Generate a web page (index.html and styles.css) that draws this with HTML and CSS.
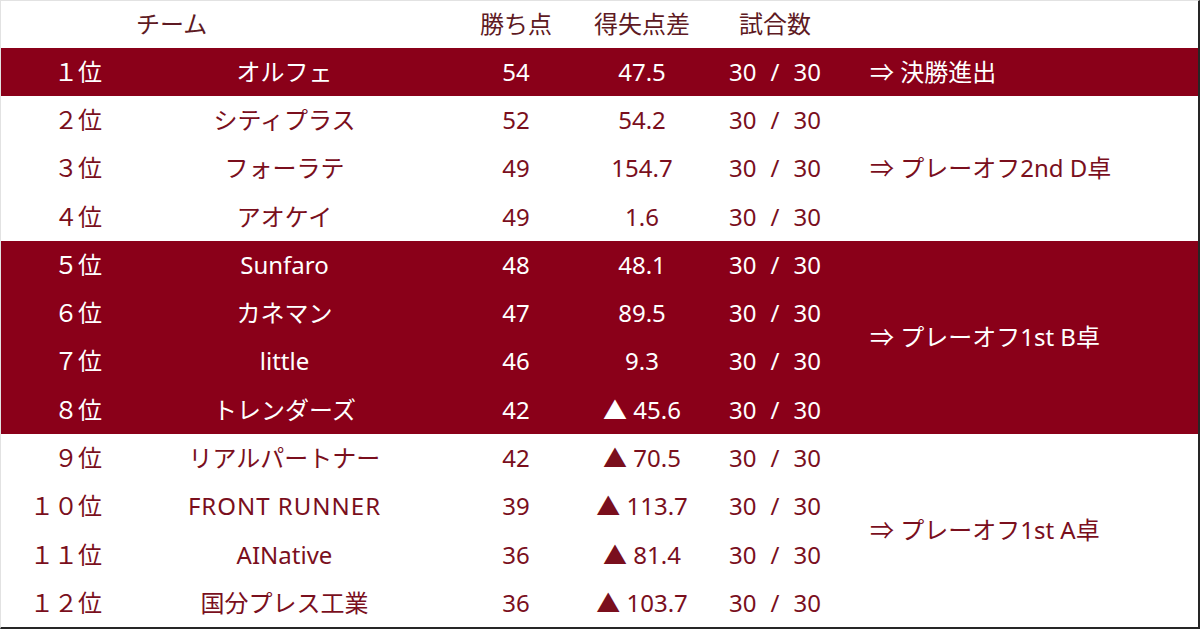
FILE: index.html
```html
<!DOCTYPE html>
<html lang="ja">
<head>
<meta charset="utf-8">
<link rel="stylesheet" href="styles.css">
</head>
<body>
<div class="frame">
<table class="standings">
  <colgroup>
    <col class="c-rank"><col class="c-team"><col class="c-pts"><col class="c-diff"><col class="c-games"><col class="c-note">
  </colgroup>
  <thead>
    <tr class="head">
      <th></th><th class="team-head">チーム</th><th>勝ち点</th><th>得失点差</th><th>試合数</th><th></th>
    </tr>
  </thead>
  <tbody>
    <tr class="hl">
      <td class="rank">１位</td><td>オルフェ</td><td>54</td><td>47.5</td><td class="games">30<span class="sl">/</span>30</td><td class="note">⇒ 決勝進出</td>
    </tr>
    <tr>
      <td class="rank">２位</td><td>シティプラス</td><td>52</td><td>54.2</td><td class="games">30<span class="sl">/</span>30</td><td class="note" rowspan="3">⇒ プレーオフ2nd D卓</td>
    </tr>
    <tr>
      <td class="rank">３位</td><td>フォーラテ</td><td>49</td><td>154.7</td><td class="games">30<span class="sl">/</span>30</td>
    </tr>
    <tr>
      <td class="rank">４位</td><td>アオケイ</td><td>49</td><td>1.6</td><td class="games">30<span class="sl">/</span>30</td>
    </tr>
    <tr class="hl">
      <td class="rank">５位</td><td>Sunfaro</td><td>48</td><td>48.1</td><td class="games">30<span class="sl">/</span>30</td><td class="note" rowspan="4">⇒ プレーオフ1st B卓</td>
    </tr>
    <tr class="hl">
      <td class="rank">６位</td><td>カネマン</td><td>47</td><td>89.5</td><td class="games">30<span class="sl">/</span>30</td>
    </tr>
    <tr class="hl">
      <td class="rank">７位</td><td>little</td><td>46</td><td>9.3</td><td class="games">30<span class="sl">/</span>30</td>
    </tr>
    <tr class="hl">
      <td class="rank">８位</td><td>トレンダーズ</td><td>42</td><td>▲ 45.6</td><td class="games">30<span class="sl">/</span>30</td>
    </tr>
    <tr>
      <td class="rank">９位</td><td>リアルパートナー</td><td>42</td><td>▲ 70.5</td><td class="games">30<span class="sl">/</span>30</td><td class="note" rowspan="4">⇒ プレーオフ1st A卓</td>
    </tr>
    <tr>
      <td class="rank">１０位</td><td class="caps">FRONT RUNNER</td><td>39</td><td>▲ 113.7</td><td class="games">30<span class="sl">/</span>30</td>
    </tr>
    <tr>
      <td class="rank">１１位</td><td>AINative</td><td>36</td><td>▲ 81.4</td><td class="games">30<span class="sl">/</span>30</td>
    </tr>
    <tr>
      <td class="rank">１２位</td><td>国分プレス工業</td><td>36</td><td>▲ 103.7</td><td class="games">30<span class="sl">/</span>30</td>
    </tr>
  </tbody>
</table>
</div>
</body>
</html>
```
FILE: styles.css
```css
html, body {
  margin: 0;
  padding: 0;
  background: #ffffff;
}
.frame {
  box-sizing: border-box;
  width: 1200px;
  height: 629px;
  border-top: 1px solid #e2e2e2;
  border-left: 1px solid #e2e2e2;
  border-right: 2px solid #262626;
  border-bottom: 2px solid #262626;
  overflow: hidden;
}
.standings {
  width: 1197px;
  height: 626px;
  border-collapse: collapse;
  table-layout: fixed;
  font-family: "Noto Sans", "Noto Sans CJK JP", sans-serif;
  font-size: 24px;
  color: #7a0f1d;
}
.c-rank { width: 109px; }
.c-team { width: 349px; }
.c-pts { width: 114px; }
.c-diff { width: 138px; }
.c-games { width: 128px; }
.c-note { width: auto; }
.standings th,
.standings td {
  padding: 0 0 1px 0;
  text-align: center;
  font-weight: normal;
  white-space: nowrap;
  line-height: 1;
}
.head th {
  height: 45px;
  padding-bottom: 2px;
  color: #5e1a23;
}
.head .team-head {
  text-align: left;
  padding-left: 26px;
}
.standings tbody tr {
  height: 48.3px;
}
.standings td.rank {
  text-align: right;
  padding-right: 8px;
}
.standings td.note {
  text-align: left;
  padding-left: 31px;
}
.standings td.caps {
  letter-spacing: 1px;
}
.sl {
  margin: 0 14px;
}
tr.hl td {
  background: #8a0019;
  color: #ffffff;
}
```
